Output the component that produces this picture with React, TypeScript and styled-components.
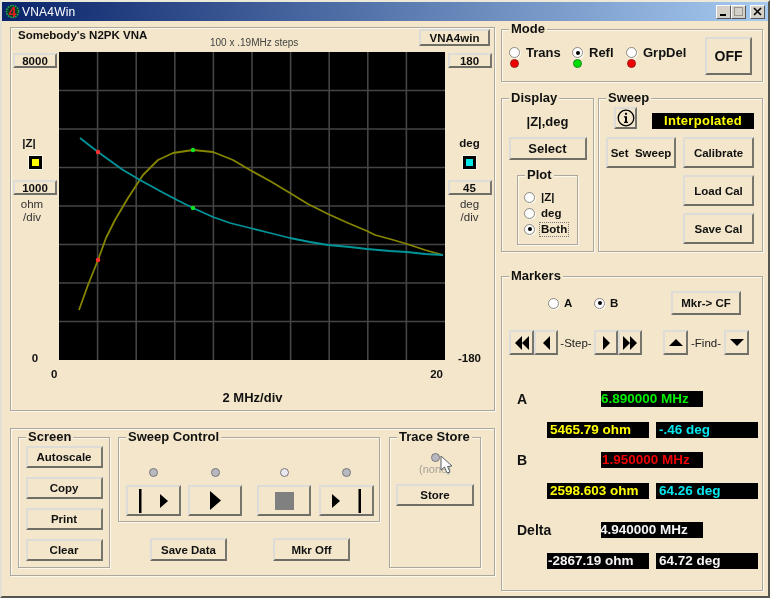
import React from 'react'
import styled, { createGlobalStyle } from 'styled-components'

const BG = '#f3e6ca'

const GlobalStyle = createGlobalStyle`
    html, body {
        margin: 0;
        padding: 0;
        background: ${BG};
        overflow: hidden;
    }
    * {
        font-family: "Liberation Sans", Arial, sans-serif;
    }
`

const Window = styled.div`
    box-sizing: border-box;
    width: 770px;
    height: 598px;
    display: flex;
    flex-direction: column;
    background: ${BG};
    border-style: solid;
    border-width: 2px;
    border-color: #ece9d8 #55544e #55544e #e4e1d4;
    filter: blur(0.4px);
    color: #111;
`

const TitleBar = styled.div`
    height: 19px;
    display: flex;
    align-items: center;
    padding: 0 3px;
    background: linear-gradient(to right, #0a246a, #a6caf0);
    flex: none;
`

const TitleText = styled.span`
    margin-left: 2px;
    color: #fff;
    font-size: 12px;
    font-weight: 400;
    letter-spacing: 0.2px;
`

const WindowButtons = styled.div`
    margin-left: auto;
    display: flex;
`

const WindowButton = styled.div<{ $disabled?: boolean; $gap?: number }>`
    box-sizing: border-box;
    width: 15px;
    height: 14px;
    margin-left: ${p => p.$gap || 0}px;
    border: 1px solid;
    border-color: #fff #555 #555 #fff;
    background: #d4d0c8;
    display: flex;
    align-items: center;
    justify-content: center;
    color: ${p => (p.$disabled ? '#9a978f' : '#000')};
`

const Main = styled.div`
    display: flex;
    gap: 6px;
    padding: 6px 0 0 8px;
`

const Column = styled.div`
    display: flex;
    flex-direction: column;
    flex: none;
`

const Group = styled.div<{ $w: number; $h: number; $top?: number }>`
    position: relative;
    box-sizing: border-box;
    flex: none;
    width: ${p => p.$w}px;
    height: ${p => p.$h}px;
    margin-top: ${p => p.$top || 0}px;
    border: 1px solid #aaa89f;
    box-shadow: inset 1px 1px 0 #fcf8ec, 1px 1px 0 #fcf8ec;
`

const GroupTitle = styled.span`
    position: absolute;
    top: -8px;
    left: 7px;
    padding: 0 2px;
    background: ${BG};
    font-size: 13px;
    font-weight: 700;
    line-height: 14px;
    white-space: nowrap;
`

const Button = styled.button<{ $w?: number; $h?: number; $size?: number }>`
    box-sizing: border-box;
    flex: none;
    width: ${p => p.$w || 78}px;
    height: ${p => p.$h || 22}px;
    padding: 0;
    display: flex;
    align-items: center;
    justify-content: center;
    background: ${BG};
    border-style: solid;
    border-width: 2px;
    border-color: #dddcd6 #77766e #6e6d66 #dddcd6;
    color: #111;
    font-size: ${p => p.$size || 11.5}px;
    font-weight: 700;
    white-space: nowrap;
`

const ScaleButton = styled(Button)`
    width: 44px;
    height: 15px;
    font-size: 11.5px;
    flex: none;
`

/* plot panel */

const PlotHeader = styled.div`
    display: grid;
    grid-template-columns: 192px 1fr auto;
    height: 24px;
    padding: 0 4px 0 7px;
`

const PlotName = styled.div`
    font-size: 11.5px;
    font-weight: 700;
    line-height: 14px;
`

const PlotCaption = styled.div`
    font-size: 10px;
    line-height: 12px;
    padding-top: 9px;
    color: #444;
`

const HeaderButton = styled(Button)`
    margin-top: 1px;
`

const PlotRow = styled.div`
    display: grid;
    grid-template-columns: 48px 386px 1fr;
    height: 308px;
`

const Axis = styled.div`
    display: flex;
    flex-direction: column;
    align-items: center;
    padding-top: 1px;
`

const AxisName = styled.div<{ $shift?: number }>`
    margin-top: 68px;
    margin-right: ${p => p.$shift || 0}px;
    font-size: 11.5px;
    font-weight: 700;
    line-height: 14px;
    height: 14px;
`

const Swatch = styled.div<{ $color: string }>`
    box-sizing: border-box;
    width: 13px;
    height: 13px;
    margin: 6px 0 11px;
    background: ${p => p.$color};
    border: 3px solid #000;
    outline: 1px solid #fbf6e8;
`

const AxisUnit = styled.div<{ $shift?: number }>`
    margin-top: 3px;
    margin-right: ${p => p.$shift || 0}px;
    font-size: 11.5px;
    line-height: 13px;
    text-align: center;
    color: #333;
`

const AxisEnd = styled.div`
    margin-top: auto;
    margin-bottom: -5px;
    font-size: 11.5px;
    font-weight: 700;
    line-height: 14px;
`

const Chart = styled.svg`
    display: block;
    width: 386px;
    height: 308px;
    background: #000;
`

const XLabels = styled.div`
    display: flex;
    justify-content: space-between;
    padding: 7px 51px 0 40px;
    font-size: 11.5px;
    font-weight: 700;
    line-height: 14px;
`

const XTitle = styled.div`
    margin-top: 9px;
    text-align: center;
    font-size: 13px;
    font-weight: 700;
    line-height: 16px;
`

/* bottom panel */

const BottomPanel = styled(Group)`
    display: flex;
    gap: 8px;
    padding: 8px 0 0 7px;
`

const ScreenGroup = styled(Group)`
    display: flex;
    flex-direction: column;
    align-items: center;
    gap: 9px;
    padding-top: 8px;
`

const SweepCells = styled.div`
    display: flex;
    gap: 7px;
    padding: 30px 0 0 7px;
`

const SweepCell = styled.div<{ $skip?: number }>`
    display: flex;
    flex-direction: column;
    align-items: center;
    gap: 8px;
    margin-left: ${p => p.$skip || 0}px;
`

const Led = styled.div<{ $color?: string; $rim?: string }>`
    box-sizing: border-box;
    width: 9px;
    height: 9px;
    flex: none;
    border-radius: 50%;
    background: ${p => p.$color || '#b8b8c0'};
    border: 1px solid ${p => p.$rim || '#77767a'};
`

const ActionRow = styled.div`
    display: flex;
    gap: 46px;
    padding-left: 32px;
    margin-top: 16px;
`

const StoreGroup = styled(Group)`
    display: flex;
    flex-direction: column;
    align-items: center;
    padding-top: 15px;
    margin-left: 1px;
`

const NoneText = styled.div`
    height: 14px;
    margin: 0 0 7px;
    padding-top: 1px;
    font-size: 11px;
    line-height: 13px;
    color: #a8a398;
`

const Cursor = styled.svg`
    position: absolute;
    left: 50px;
    top: 17px;
    width: 13px;
    height: 20px;
`

/* mode */

const ModeGroup = styled(Group)`
    display: flex;
    padding: 7px 10px 0 7px;
`

const ModeOption = styled.div<{ $w: number }>`
    width: ${p => p.$w}px;
    padding-top: 10px;
    display: grid;
    grid-template-columns: 11px 1fr;
    align-content: start;
    column-gap: 6px;
    row-gap: 1px;
    justify-items: center;
    align-items: center;
`

const ModeLabel = styled.span`
    justify-self: start;
    font-size: 13px;
    font-weight: 700;
    line-height: 11px;
`

const Radio = styled.span<{ $on?: boolean }>`
    box-sizing: border-box;
    flex: none;
    display: flex;
    align-items: center;
    justify-content: center;
    width: 11px;
    height: 11px;
    border-radius: 50%;
    background: #fff;
    border: 1px solid #8a8880;
    box-shadow: 1px 1px 0 #fcf8ec;

    &::after {
        content: '';
        display: ${p => (p.$on ? 'block' : 'none')};
        width: 4px;
        height: 4px;
        border-radius: 50%;
        background: #000;
    }
`

const OffButton = styled(Button)`
    margin-left: auto;
    width: 47px;
    height: 38px;
    font-size: 14px;
`

/* display + sweep */

const MiddleRow = styled.div`
    display: flex;
    gap: 4px;
    margin-top: 16px;
`

const DisplayGroup = styled(Group)`
    display: flex;
    flex-direction: column;
    align-items: center;
    padding-top: 16px;
`

const DisplayName = styled.div`
    font-size: 13px;
    font-weight: 700;
    line-height: 14px;
    margin-bottom: 8px;
`

const PlotGroup = styled(Group)`
    margin-top: 15px;
    padding: 13px 0 0 6px;
`

const PlotOption = styled.div`
    display: flex;
    align-items: center;
    gap: 5px;
    height: 16px;
`

const PlotLabel = styled.span<{ $focus?: boolean }>`
    font-size: 11.5px;
    font-weight: 700;
    line-height: 13px;
    padding: 0 1px;
    outline: ${p => (p.$focus ? '1px dotted #777' : 'none')};
`

const SweepTop = styled.div`
    display: flex;
    align-items: flex-end;
    gap: 15px;
    padding: 8px 0 0 15px;
    height: 22px;
`

const InfoButton = styled(Button)`
    width: 23px;
    height: 22px;
`

const ModeBadge = styled.div`
    width: 102px;
    height: 16px;
    background: #000;
    color: #ffff00;
    font-size: 13px;
    font-weight: 700;
    line-height: 16px;
    letter-spacing: 0.3px;
    text-align: center;
`

const SweepGrid = styled.div`
    display: grid;
    grid-template-columns: 70px 71px;
    grid-auto-rows: 31px;
    gap: 7px;
    margin-top: 8px;
    padding-left: 7px;
`

const SecondColumn = styled(Button)`
    grid-column: 2;
`

/* markers */

const MarkerTop = styled.div`
    display: flex;
    align-items: center;
    height: 24px;
    margin-top: 14px;
    padding-left: 46px;
`

const MarkerChoice = styled.div<{ $w: number }>`
    display: flex;
    align-items: center;
    gap: 5px;
    width: ${p => p.$w}px;
    font-size: 11.5px;
    font-weight: 700;
`

const StepRow = styled.div`
    display: flex;
    align-items: center;
    height: 25px;
    margin-top: 15px;
    padding-left: 7px;
`

const StepButton = styled(Button)<{ $skip?: number }>`
    height: 25px;
    margin-left: ${p => p.$skip || 0}px;
`

const StepText = styled.span<{ $w: number }>`
    width: ${p => p.$w}px;
    text-align: center;
    font-size: 11.5px;
    font-weight: 400;
    color: #222;
`

const Readouts = styled.div`
    margin-top: 36px;
    padding-left: 15px;
`

const FreqRow = styled.div<{ $top?: number }>`
    display: grid;
    grid-template-columns: 84px 102px;
    align-items: center;
    margin-top: ${p => p.$top || 0}px;
`

const ValueRow = styled.div`
    display: flex;
    gap: 7px;
    margin: 15px 0 0 30px;
`

const MarkerName = styled.div`
    font-size: 14px;
    font-weight: 700;
    line-height: 16px;
`

const Readout = styled.div<{ $color: string; $indent?: number }>`
    box-sizing: border-box;
    width: 102px;
    height: 16px;
    text-indent: ${p => p.$indent ?? 3}px;
    background: #000;
    color: ${p => p.$color};
    font-size: 13.5px;
    font-weight: 700;
    line-height: 16px;
    white-space: nowrap;
    overflow: hidden;
`

const Arrow = ({ dir, n = 1, w = 7, h = 13 }: { dir: 'l' | 'r' | 'u' | 'd'; n?: number; w?: number; h?: number }) => {
    if (dir === 'u' || dir === 'd') {
        const pts = dir === 'u' ? `0,${h} ${w},${h} ${w / 2},0` : `0,0 ${w},0 ${w / 2},${h}`
        return (
            <svg width={w} height={h}>
                <polygon points={pts} fill="#000" />
            </svg>
        )
    }
    const tris = Array.from({ length: n }, (_, i) => {
        const x = i * w
        return dir === 'r'
            ? `${x},0 ${x + w},${h / 2} ${x},${h}`
            : `${x + w},0 ${x},${h / 2} ${x + w},${h}`
    })
    return (
        <svg width={w * n} height={h}>
            {tris.map(t => <polygon key={t} points={t} fill="#000" />)}
        </svg>
    )
}

const BarArrow = ({ flip }: { flip?: boolean }) => (
    <svg width="29" height="24" viewBox="0 0 29 24">
        {flip ? (
            <>
                <rect x="26.5" y="0" width="2.5" height="24" fill="#000" />
                <polygon points="0,5 8,12 0,19" fill="#000" />
            </>
        ) : (
            <>
                <rect x="0" y="0" width="2.5" height="24" fill="#000" />
                <polygon points="21,5 29,12 21,19" fill="#000" />
            </>
        )}
    </svg>
)

const AppIcon = () => (
    <svg width="15" height="15" viewBox="0 0 15 15">
        <circle cx="7.5" cy="7.5" r="6" fill="#0a3a2a" stroke="#22b04a" strokeWidth="1.6" strokeDasharray="1.5 1" />
        <text x="7.5" y="12.5" textAnchor="middle" fontSize="14" fontWeight="700" fill="#e02020">4</text>
    </svg>
)

const InfoIcon = () => (
    <svg width="18" height="18" viewBox="0 0 18 18">
        <circle cx="9" cy="9" r="7.8" fill="none" stroke="#000" strokeWidth="1.3" />
        <rect x="8" y="3.8" width="2" height="2" fill="#000" />
        <path d="M7 7.3 H10 V12.8 H11 V14 H7 V12.8 H8 V8.4 H7 Z" fill="#000" />
    </svg>
)

// curves traced in page pixels, offset to the chart's corner
const toPoints = (pts: number[][]) => pts.map(([x, y]) => `${x - 59},${y - 52}`).join(' ')

const yellowCurve = [
    [79, 310], [88, 285], [98, 260], [106, 238], [115, 220], [128, 198], [143, 175], [158, 160],
    [173, 153], [193, 150], [213, 152], [233, 160], [250, 170], [270, 181], [290, 193], [308, 204],
    [328, 214], [348, 223], [367, 231], [375, 235], [390, 239], [407, 244], [425, 250], [443, 255],
]

const tealCurve = [
    [80, 138], [98, 152], [123, 170], [140, 180], [160, 191], [177, 200], [193, 208], [213, 217],
    [230, 223], [250, 228], [270, 233], [290, 238], [310, 242], [328, 245], [350, 247], [367, 249],
    [390, 251], [407, 252], [425, 254], [443, 255],
]

const PlotChart = () => (
    <Chart viewBox="0 0 386 308">
        {[1, 2, 3, 4, 5, 6, 7, 8, 9].map(i => (
            <line key={i} x1={i * 38.6} y1="0" x2={i * 38.6} y2="308" stroke="#444" strokeWidth="1.6" />
        ))}
        {[1, 2, 3, 4, 5, 6, 7].map(i => (
            <line key={i} x1="0" y1={i * 38.5} x2="386" y2={i * 38.5} stroke="#444" strokeWidth="1.6" />
        ))}
        <polyline points={toPoints(yellowCurve)} fill="none" stroke="#858500" strokeWidth="1.8" strokeLinejoin="round" />
        <polyline points={toPoints(tealCurve)} fill="none" stroke="#009599" strokeWidth="1.8" strokeLinejoin="round" />
        <circle cx="39" cy="100" r="2.2" fill="#ff3030" />
        <circle cx="39" cy="208" r="2.2" fill="#ff3030" />
        <circle cx="134" cy="98" r="2.2" fill="#10e020" />
        <circle cx="134" cy="156" r="2.2" fill="#10e020" />
    </Chart>
)

const PlotPanel = () => (
    <Group $w={485} $h={384}>
        <PlotHeader>
            <PlotName>Somebody's N2PK VNA</PlotName>
            <PlotCaption>100 x .19MHz steps</PlotCaption>
            <HeaderButton $w={71} $h={17}>VNA4win</HeaderButton>
        </PlotHeader>
        <PlotRow>
            <Axis>
                <ScaleButton>8000</ScaleButton>
                <AxisName $shift={12}>|Z|</AxisName>
                <Swatch $color="#ffff00" />
                <ScaleButton>1000</ScaleButton>
                <AxisUnit $shift={6}>ohm<br />/div</AxisUnit>
                <AxisEnd>0</AxisEnd>
            </Axis>
            <PlotChart />
            <Axis>
                <ScaleButton>180</ScaleButton>
                <AxisName>deg</AxisName>
                <Swatch $color="#00e8e8" />
                <ScaleButton>45</ScaleButton>
                <AxisUnit>deg<br />/div</AxisUnit>
                <AxisEnd>-180</AxisEnd>
            </Axis>
        </PlotRow>
        <XLabels>
            <span>0</span>
            <span>20</span>
        </XLabels>
        <XTitle>2 MHz/div</XTitle>
    </Group>
)

const ControlPanel = () => (
    <BottomPanel $w={485} $h={148} $top={17}>
        <ScreenGroup $w={92} $h={131}>
            <GroupTitle>Screen</GroupTitle>
            <Button $w={77}>Autoscale</Button>
            <Button $w={77}>Copy</Button>
            <Button $w={77}>Print</Button>
            <Button $w={77}>Clear</Button>
        </ScreenGroup>
        <Column>
            <Group $w={262} $h={85}>
                <GroupTitle>Sweep Control</GroupTitle>
                <SweepCells>
                    <SweepCell>
                        <Led />
                        <Button $w={55} $h={31}><BarArrow /></Button>
                    </SweepCell>
                    <SweepCell>
                        <Led />
                        <Button $w={54} $h={31}><Arrow dir="r" w={11} h={19} /></Button>
                    </SweepCell>
                    <SweepCell $skip={8}>
                        <Led $color="#e8e8ee" />
                        <Button $w={54} $h={31}>
                            <svg width="19" height="18"><rect width="19" height="18" fill="#808080" /></svg>
                        </Button>
                    </SweepCell>
                    <SweepCell $skip={1}>
                        <Led />
                        <Button $w={55} $h={31}><BarArrow flip /></Button>
                    </SweepCell>
                </SweepCells>
            </Group>
            <ActionRow>
                <Button $w={77} $h={23}>Save Data</Button>
                <Button $w={77} $h={23}>Mkr Off</Button>
            </ActionRow>
        </Column>
        <StoreGroup $w={92} $h={131}>
            <GroupTitle>Trace Store</GroupTitle>
            <Led />
            <NoneText>(none)</NoneText>
            <Button>Store</Button>
            <Cursor viewBox="0 0 13 20">
                <polygon points="1,1 1,15 4.5,12 7,18 10,17 7.5,11.5 12,11" fill="#fff" stroke="#55606a" strokeWidth="1" />
            </Cursor>
        </StoreGroup>
    </BottomPanel>
)

const ModePanel = () => (
    <ModeGroup $w={262} $h={53} $top={2}>
        <GroupTitle>Mode</GroupTitle>
        <ModeOption $w={63}>
            <Radio />
            <ModeLabel>Trans</ModeLabel>
            <Led $color="#ee0000" $rim="#9a2020" />
        </ModeOption>
        <ModeOption $w={54}>
            <Radio $on />
            <ModeLabel>Refl</ModeLabel>
            <Led $color="#00dd00" $rim="#208a20" />
        </ModeOption>
        <ModeOption $w={70}>
            <Radio />
            <ModeLabel>GrpDel</ModeLabel>
            <Led $color="#ee0000" $rim="#9a2020" />
        </ModeOption>
        <OffButton>OFF</OffButton>
    </ModeGroup>
)

const DisplayPanel = () => (
    <DisplayGroup $w={93} $h={154}>
        <GroupTitle>Display</GroupTitle>
        <DisplayName>|Z|,deg</DisplayName>
        <Button $h={23} $size={13}>Select</Button>
        <PlotGroup $w={61} $h={70}>
            <GroupTitle>Plot</GroupTitle>
            <PlotOption><Radio /><PlotLabel>|Z|</PlotLabel></PlotOption>
            <PlotOption><Radio /><PlotLabel>deg</PlotLabel></PlotOption>
            <PlotOption><Radio $on /><PlotLabel $focus>Both</PlotLabel></PlotOption>
        </PlotGroup>
    </DisplayGroup>
)

const SweepPanel = () => (
    <Group $w={165} $h={154}>
        <GroupTitle>Sweep</GroupTitle>
        <SweepTop>
            <InfoButton><InfoIcon /></InfoButton>
            <ModeBadge>Interpolated</ModeBadge>
        </SweepTop>
        <SweepGrid>
            <Button $w={70} $h={31}>Set&nbsp;&nbsp;Sweep</Button>
            <Button $w={71} $h={31}>Calibrate</Button>
            <SecondColumn $w={71} $h={31}>Load Cal</SecondColumn>
            <SecondColumn $w={71} $h={31}>Save Cal</SecondColumn>
        </SweepGrid>
    </Group>
)

const MarkersPanel = () => (
    <Group $w={262} $h={315} $top={24}>
        <GroupTitle>Markers</GroupTitle>
        <MarkerTop>
            <MarkerChoice $w={46}><Radio />A</MarkerChoice>
            <MarkerChoice $w={77}><Radio $on />B</MarkerChoice>
            <Button $w={70} $h={24}>Mkr-&gt; CF</Button>
        </MarkerTop>
        <StepRow>
            <StepButton $w={25}><Arrow dir="l" n={2} w={7} h={14} /></StepButton>
            <StepButton $w={24}><Arrow dir="l" w={7} h={14} /></StepButton>
            <StepText $w={36}>-Step-</StepText>
            <StepButton $w={24}><Arrow dir="r" w={7} h={14} /></StepButton>
            <StepButton $w={24}><Arrow dir="r" n={2} w={7} h={14} /></StepButton>
            <StepButton $w={25} $skip={21}><Arrow dir="u" w={14} h={7} /></StepButton>
            <StepText $w={36}>-Find-</StepText>
            <StepButton $w={25}><Arrow dir="d" w={14} h={7} /></StepButton>
        </StepRow>
        <Readouts>
            <FreqRow>
                <MarkerName>A</MarkerName>
                <Readout $color="#00f000" $indent={0}>6.890000 MHz</Readout>
            </FreqRow>
            <ValueRow>
                <Readout $color="#ffff00">5465.79 ohm</Readout>
                <Readout $color="#00e8f0">-.46 deg</Readout>
            </ValueRow>
            <FreqRow $top={14}>
                <MarkerName>B</MarkerName>
                <Readout $color="#f00000" $indent={1}>1.950000 MHz</Readout>
            </FreqRow>
            <ValueRow>
                <Readout $color="#ffff00">2598.603 ohm</Readout>
                <Readout $color="#00e8f0">64.26 deg</Readout>
            </ValueRow>
            <FreqRow $top={23}>
                <MarkerName>Delta</MarkerName>
                <Readout $color="#f4f4f4" $indent={-1}>4.940000 MHz</Readout>
            </FreqRow>
            <ValueRow>
                <Readout $color="#f4f4f4" $indent={1}>-2867.19 ohm</Readout>
                <Readout $color="#f4f4f4">64.72 deg</Readout>
            </ValueRow>
        </Readouts>
    </Group>
)

const App = () => (
    <>
        <GlobalStyle />
        <Window>
            <TitleBar>
                <AppIcon />
                <TitleText>VNA4Win</TitleText>
                <WindowButtons>
                    <WindowButton>
                        <svg width="9" height="9"><rect x="1" y="7" width="6" height="2" fill="#000" /></svg>
                    </WindowButton>
                    <WindowButton $disabled>
                        <svg width="9" height="9"><rect x="0.5" y="0.5" width="8" height="8" fill="none" stroke="currentColor" /></svg>
                    </WindowButton>
                    <WindowButton $gap={4}>
                        <svg width="9" height="9"><path d="M1 1 L8 8 M8 1 L1 8" stroke="#000" strokeWidth="1.6" /></svg>
                    </WindowButton>
                </WindowButtons>
            </TitleBar>
            <Main>
                <Column>
                    <PlotPanel />
                    <ControlPanel />
                </Column>
                <Column>
                    <ModePanel />
                    <MiddleRow>
                        <DisplayPanel />
                        <SweepPanel />
                    </MiddleRow>
                    <MarkersPanel />
                </Column>
            </Main>
        </Window>
    </>
)

export default App
